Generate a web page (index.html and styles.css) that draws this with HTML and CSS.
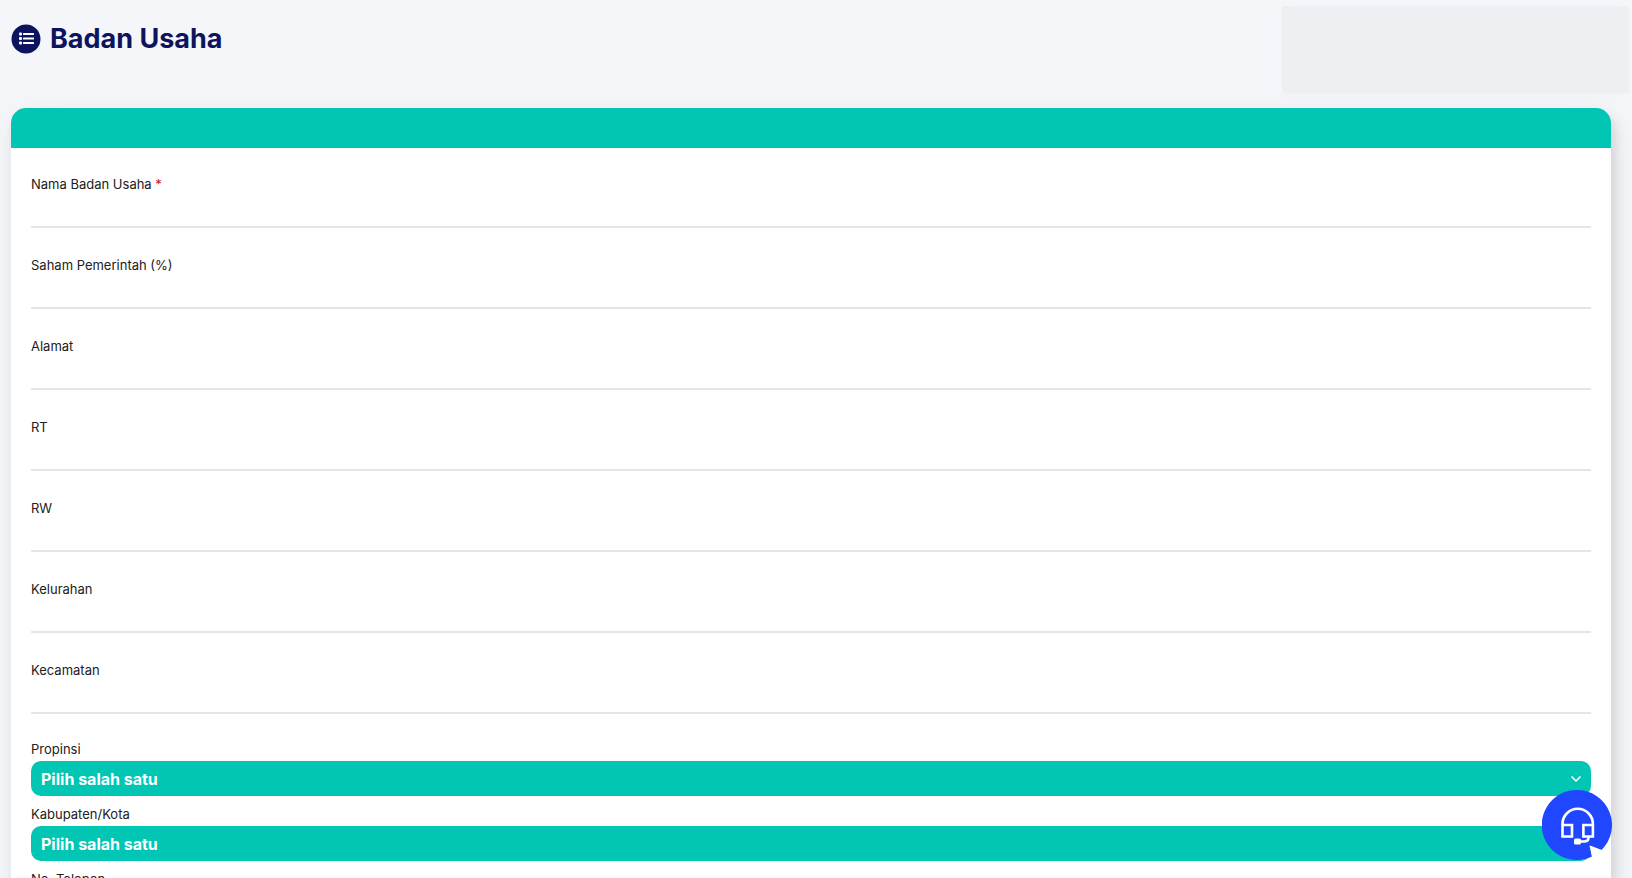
FILE: index.html
```html
<!DOCTYPE html>
<html lang="id">
<head>
<meta charset="utf-8">
<title>Badan Usaha</title>
<link rel="stylesheet" href="styles.css">
</head>
<body>
<header class="page-header">
  <h1 class="page-title">
    <svg class="title-icon" viewBox="0 0 30 30" aria-hidden="true">
      <circle cx="15" cy="15" r="14.5" fill="#0d145f"/>
      <g fill="#fff">
        <rect x="8" y="8.500" width="3" height="3" rx="1"/><rect x="8" y="13" width="3" height="3" rx="1"/><rect x="8" y="17.500" width="3" height="3" rx="1"/>
        <rect x="12" y="9" width="11" height="2" rx=".5"/><rect x="12" y="13.500" width="11" height="2" rx=".5"/><rect x="12" y="18" width="11" height="2" rx=".5"/>
      </g>
    </svg>
    Badan Usaha
  </h1>
  <div class="user-panel"></div>
</header>
<main class="card">
  <div class="card-header"></div>
  <form class="card-body">
    <div class="text-fields">
      <div class="field"><label for="nama">Nama Badan Usaha <span class="required">*</span></label><input id="nama" type="text" required></div>
      <div class="field"><label for="saham">Saham Pemerintah (%)</label><input id="saham" type="text"></div>
      <div class="field"><label for="alamat">Alamat</label><input id="alamat" type="text"></div>
      <div class="field"><label for="rt">RT</label><input id="rt" type="text"></div>
      <div class="field"><label for="rw">RW</label><input id="rw" type="text"></div>
      <div class="field"><label for="kelurahan">Kelurahan</label><input id="kelurahan" type="text"></div>
      <div class="field"><label for="kecamatan">Kecamatan</label><input id="kecamatan" type="text"></div>
    </div>
    <div class="select-fields">
      <div class="select-field">
        <label for="propinsi">Propinsi</label>
        <div class="select-box">
          <select id="propinsi"><option>Pilih salah satu</option></select>
          <svg class="chevron" viewBox="0 0 12 12" aria-hidden="true"><path d="M1.5 3.5 6 8l4.500-4.500"/></svg>
        </div>
      </div>
      <div class="select-field">
        <label for="kabupaten">Kabupaten/Kota</label>
        <div class="select-box">
          <select id="kabupaten"><option>Pilih salah satu</option></select>
          <svg class="chevron" viewBox="0 0 12 12" aria-hidden="true"><path d="M1.5 3.5 6 8l4.500-4.500"/></svg>
        </div>
      </div>
      <div class="field"><label for="telepon">No. Telepon</label><input id="telepon" type="tel"></div>
    </div>
  </form>
</main>
<button class="chat" type="button" aria-label="Bantuan">
  <svg viewBox="0 0 70 70" aria-hidden="true">
    <path fill="#2146ff" d="M35 0a35 35 0 0 1 24.500 60L47.500 55.500 50 66.500A35 35 0 1 1 35 0Z"/>
    <path fill="#fff" d="M47.500 55.500 59.500 60 50 66.500Z"/>
    <g fill="none" stroke="#fff" stroke-width="2.600"><path d="M20.500 35V34a15.200 15.200 0 0 1 30.400 0V35M20.500 35h9.500v11.500h-9.500zM41.400 35h9.500v11.500h-9.500zM46.500 46.500v1q0 4-4.500 4h-3"/></g>
    <rect x="32" y="48.500" width="7" height="6" rx="1.500" fill="#fff"/>
  </svg>
</button>
</body>
</html>
```
FILE: styles.css
```css
* { box-sizing: border-box; }
html { scrollbar-width: none; }
body {
  margin: 0;
  background: #f5f6fa;
  color: #212121;
  font: 13px/20px Inter, "Liberation Sans", sans-serif;
}
.page-header {
  display: flex;
  justify-content: space-between;
  align-items: flex-start;
  padding: 6px 3px 15px 11px;
}
.page-title {
  display: flex;
  align-items: center;
  gap: 9px;
  margin: 17px 0 0;
  color: #0d145f;
  font: 700 27px/32px Inter, sans-serif;
}
.title-icon { width: 30px; height: 30px; }
.user-panel {
  width: 347px;
  height: 87px;
  background: #eeeff3;
  box-shadow: 0 4px 12px -4px #eeeff3;
}
.card {
  margin: 0 21px 20px 11px;
  background: #fff;
  border-radius: 15px;
  box-shadow: 4px 8px 12px rgba(0, 0, 0, .1), 4px 8px 30px rgba(0, 0, 0, .07);
}
.card-header {
  height: 40px;
  background: #00c6b3;
  border-radius: 15px 15px 0 0;
}
.card-body {
  display: grid;
  gap: 25px;
  padding: 26px 20px;
}
.text-fields { display: grid; gap: 27px; }
label { display: block; }
.required { color: #d0112b; }
.field input {
  display: block;
  width: 100%;
  height: 34px;
  padding: 0;
  border: 0;
  border-bottom: 2px solid #e4e4ea;
  background: transparent;
  font: inherit;
  outline: 0;
}
.select-fields { display: grid; gap: 8px; }
.select-field { display: grid; gap: 2px; }
.select-box { display: grid; align-items: center; }
.select-box > * { grid-area: 1 / 1; }
.select-box select {
  appearance: none;
  width: 100%;
  height: 35px;
  padding: 0 10px;
  border: 0;
  border-radius: 10px;
  background: #00c6b3;
  color: #fff;
  font: 700 16px/20px Inter, sans-serif;
}
.chevron {
  justify-self: end;
  width: 12px;
  height: 12px;
  margin-right: 9px;
  fill: none;
  stroke: #fff;
  stroke-width: 1.5;
  pointer-events: none;
}
.chat {
  position: fixed;
  right: 20px;
  bottom: 18px;
  width: 70px;
  height: 70px;
  padding: 0;
  border: 0;
  background: none;
}
.chat svg { display: block; width: 100%; height: 100%; }
```
